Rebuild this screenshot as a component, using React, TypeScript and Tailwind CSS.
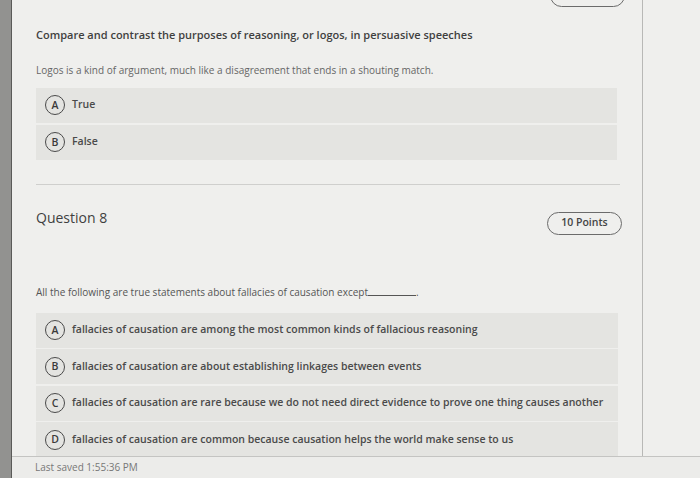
import React from "react";

interface OptionProps {
  letter: string;
  text: string;
}

const Option: React.FC<OptionProps> = ({ letter, text }) => (
  <div className="flex h-[35px] shrink-0 items-center bg-[#e4e4e1] pl-[9px]">
    <span className="flex h-[20px] w-[20px] shrink-0 items-center justify-center rounded-full border-[1.5px] border-[#4a4a4a] text-[10.5px] font-semibold leading-none text-[#3a3a3a]">
      {letter}
    </span>
    <span className="ml-[7px] text-[10.5px] font-semibold text-[#4a4a4a]">{text}</span>
  </div>
);

const Pill: React.FC<{ className?: string; children?: React.ReactNode }> = ({ className, children }) => (
  <div
    className={
      "flex h-[23px] w-[75px] shrink-0 items-center justify-center rounded-full border border-[#6b6b6b] text-[10.5px] font-semibold text-[#444] " +
      (className ?? "")
    }
  >
    {children}
  </div>
);

export default function App() {
  return (
    <div
      className="flex h-[478px] w-[700px] overflow-hidden bg-[#eeeeec]"
      style={{ fontFamily: '"Open Sans", "Noto Sans", sans-serif' }}
    >
      {/* left edge of screen */}
      <div className="w-[12px] shrink-0 border-r border-[#5a5a58] bg-[#929290]" />

      <div className="flex flex-1 flex-col">
        <div className="flex h-[456px] shrink-0">
          {/* question card */}
          <div className="w-[631px] shrink-0 overflow-hidden border-r border-[#b8b8b6] bg-[#efefed] pl-[24px] pr-[22px]">
            {/* bottom of previous question's points badge */}
            <div className="flex justify-end">
              <Pill className="-mt-[16px] mr-[-5px]" />
            </div>

            <div className="mt-[20px] text-[11px] font-semibold text-[#3f3f3f]">
              Compare and contrast the purposes of reasoning, or logos, in persuasive speeches
            </div>
            <div className="mt-[19px] text-[10px] text-[#666]">
              Logos is a kind of argument, much like a disagreement that ends in a shouting match.
            </div>

            <div className="mt-[10px] flex flex-col gap-[2px] pr-[3px]">
              <Option letter="A" text="True" />
              <Option letter="B" text="False" />
            </div>

            <div className="mt-[24px] h-px bg-[#cfcfcd]" />

            <div className="mt-[22px] flex items-start justify-between">
              <span className="text-[14px] text-[#3f3f3f]">Question 8</span>
              <Pill className="mr-[-2px] mt-[5px]">10 Points</Pill>
            </div>

            <div className="mt-[50px] text-[10px] text-[#555]">
              All the following are true statements about fallacies of causation except
              <span className="inline-block w-[48px] border-b border-[#555] align-baseline" />.
            </div>

            <div className="mt-[13px] flex flex-col gap-[1.5px] pr-[2px]">
              <Option letter="A" text="fallacies of causation are among the most common kinds of fallacious reasoning" />
              <Option letter="B" text="fallacies of causation are about establishing linkages between events" />
              <Option letter="C" text="fallacies of causation are rare because we do not need direct evidence to prove one thing causes another" />
              <Option letter="D" text="fallacies of causation are common because causation helps the world make sense to us" />
            </div>
          </div>
          <div className="flex-1 bg-[#efefed]" />
        </div>

        <div className="flex flex-1 items-center border-t border-[#c4c4c2] bg-[#ececea] pl-[23px]">
          <span className="text-[10px] text-[#777]">Last saved 1:55:36 PM</span>
        </div>
      </div>
    </div>
  );
}
